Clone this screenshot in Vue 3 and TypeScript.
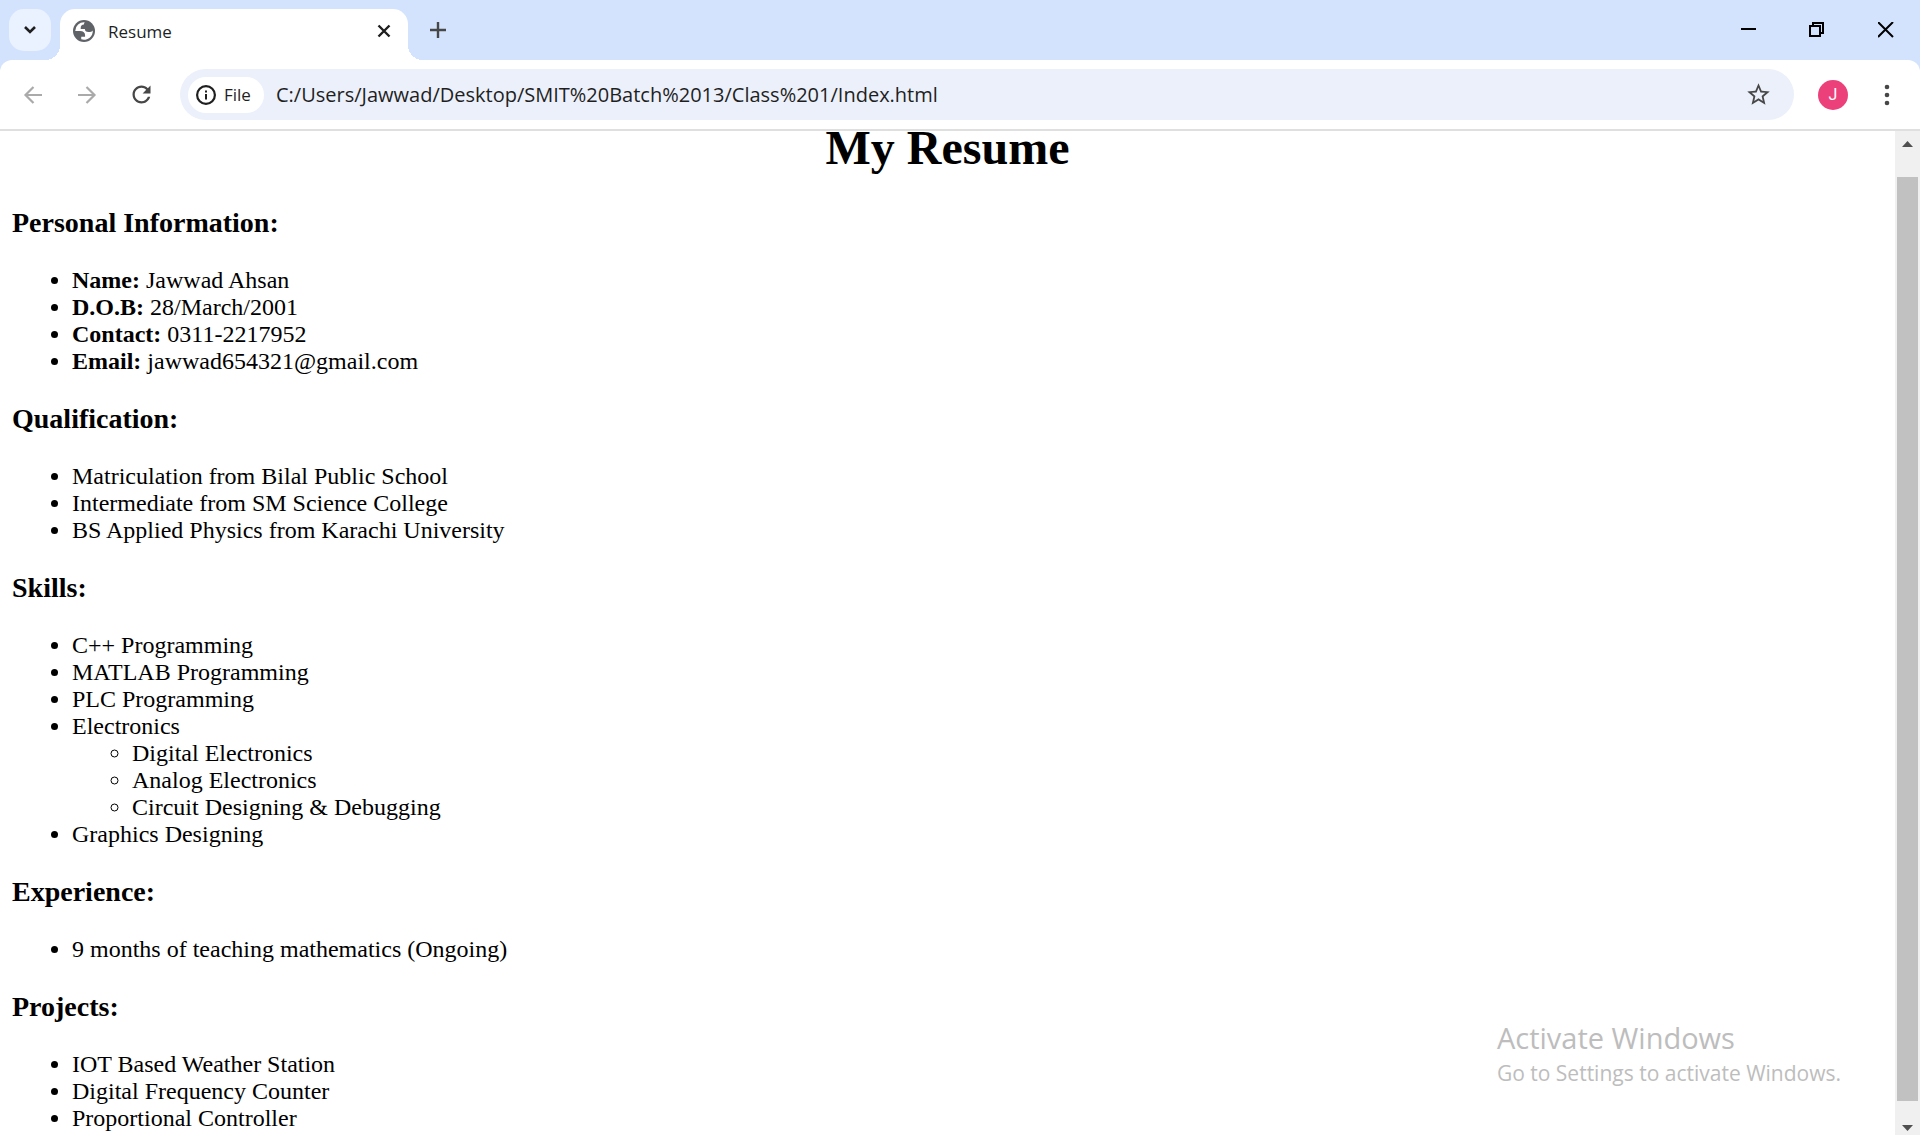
<script setup lang="ts">
import { ref } from 'vue'

interface Entry {
  label?: string
  text: string
  children?: string[]
}
interface Section {
  title: string
  items: Entry[]
}

const address = ref('C:/Users/Jawwad/Desktop/SMIT%20Batch%2013/Class%201/Index.html')

const sections: Section[] = [
  {
    title: 'Personal Information:',
    items: [
      { label: 'Name:', text: 'Jawwad Ahsan' },
      { label: 'D.O.B:', text: '28/March/2001' },
      { label: 'Contact:', text: '0311-2217952' },
      { label: 'Email:', text: 'jawwad654321@gmail.com' },
    ],
  },
  {
    title: 'Qualification:',
    items: [
      { text: 'Matriculation from Bilal Public School' },
      { text: 'Intermediate from SM Science College' },
      { text: 'BS Applied Physics from Karachi University' },
    ],
  },
  {
    title: 'Skills:',
    items: [
      { text: 'C++ Programming' },
      { text: 'MATLAB Programming' },
      { text: 'PLC Programming' },
      {
        text: 'Electronics',
        children: ['Digital Electronics', 'Analog Electronics', 'Circuit Designing & Debugging'],
      },
      { text: 'Graphics Designing' },
    ],
  },
  {
    title: 'Experience:',
    items: [{ text: '9 months of teaching mathematics (Ongoing)' }],
  },
  {
    title: 'Projects:',
    items: [
      { text: 'IOT Based Weather Station' },
      { text: 'Digital Frequency Counter' },
      { text: 'Proportional Controller' },
    ],
  },
]
</script>

<template>
  <div class="browser">
    <header class="tabstrip">
      <button class="tab-search" aria-label="Search tabs">
        <svg width="14" height="10" viewBox="0 0 14 10"><path d="M2 2l5 5 5-5" fill="none" stroke="#1f1f1f" stroke-width="2.600" /></svg>
      </button>
      <div class="tab">
        <svg width="22" height="22" viewBox="2 2 20 20">
          <circle cx="12" cy="12" r="10" fill="#5f6368" />
          <path d="M4 12h4.400c3.407.022 4.922 1.730 4.543 5.127H9.488v2.470a8.004 8.004 0 0 0 10.498-8.083C19.327 12.504 18 13 16 13c-2.137 0-3.206-.916-3.206-2.750h-3.748c-.274-2.728.683-4.092 2.870-4.092 0-.975.327-1.597.811-1.970A8.004 8.004 0 0 0 4 12z" fill="#fff" />
        </svg>
        <span class="tab-title">Resume</span>
        <button class="tab-close" aria-label="Close tab">
          <svg width="14" height="14" viewBox="0 0 14 14"><path d="M1.500 1.500l11 11M12.500 1.500l-11 11" stroke="#1f1f1f" stroke-width="2.400" /></svg>
        </button>
      </div>
      <button class="new-tab" aria-label="New tab">
        <svg width="16" height="16" viewBox="0 0 16 16"><path d="M8 0v16M0 8h16" stroke="#474747" stroke-width="2.400" /></svg>
      </button>
      <div class="window-controls">
        <button aria-label="Minimize"><svg width="16" height="16" viewBox="0 0 16 16"><path d="M1 7h15" stroke="#000" stroke-width="2" /></svg></button>
        <button aria-label="Restore"><svg width="16" height="16" viewBox="0 0 16 16"><path d="M1 4h10v10H1zM4 4V1h10v10h-3" fill="none" stroke="#000" stroke-width="2" /></svg></button>
        <button aria-label="Close"><svg width="16" height="16" viewBox="0 0 16 16"><path d="M0 0l15 15M15 0L0 15" stroke="#000" stroke-width="2" /></svg></button>
      </div>
    </header>

    <div class="toolbar-back">
      <nav class="toolbar">
        <button class="nav-button" aria-label="Back" disabled>
          <svg width="20" height="20" viewBox="0 0 20 20"><path d="M19 10H3M10.500 2l-8 8 8 8" fill="none" stroke="#aaa" stroke-width="2.200" /></svg>
        </button>
        <button class="nav-button" aria-label="Forward" disabled>
          <svg width="20" height="20" viewBox="0 0 20 20"><path d="M1 10h16M9.500 2l8 8-8 8" fill="none" stroke="#aaa" stroke-width="2.200" /></svg>
        </button>
        <button class="nav-button" aria-label="Reload">
          <svg width="27" height="27" viewBox="0 0 24 24"><path d="M17.650 6.350C16.200 4.900 14.210 4 12 4c-4.420 0-7.990 3.580-7.990 8s3.570 8 7.990 8c3.730 0 6.840-2.550 7.730-6h-2.080c-.82 2.330-3.040 4-5.650 4-3.310 0-6-2.690-6-6s2.690-6 6-6c1.660 0 3.140.690 4.220 1.780L13 11h7V4l-2.350 2.350z" fill="#474747" /></svg>
        </button>
        <div class="omnibox">
          <button class="site-info">
            <svg width="20" height="20" viewBox="0 0 20 20"><circle cx="10" cy="10" r="8.900" fill="none" stroke="#1f1f1f" stroke-width="2.200" /><path d="M10 9v5.500M10 5.500v2" stroke="#1f1f1f" stroke-width="2" /></svg>
            <span>File</span>
          </button>
          <input v-model="address" class="address" type="text" aria-label="Address" spellcheck="false" />
          <button class="star" aria-label="Bookmark this page">
            <svg width="27" height="27" viewBox="0 0 24 24"><path d="M22 9.240l-7.190-.620L12 2 9.190 8.630 2 9.240l5.460 4.730L5.820 21 12 17.270 18.180 21l-1.630-7.030L22 9.240zM12 15.400l-3.760 2.270 1-4.280-3.320-2.880 4.380-.380L12 6.100l1.710 4.040 4.380.380-3.320 2.880 1 4.280L12 15.400z" fill="#474747" /></svg>
          </button>
        </div>
        <button class="avatar" aria-label="Profile">J</button>
        <button class="menu" aria-label="Menu">
          <svg width="6" height="22" viewBox="0 0 6 22" fill="#474747"><circle cx="3" cy="3" r="2.300" /><circle cx="3" cy="11" r="2.300" /><circle cx="3" cy="19" r="2.300" /></svg>
        </button>
      </nav>
    </div>

    <div class="viewport">
      <main class="page">
        <h1>My Resume</h1>
        <section v-for="section in sections" :key="section.title">
          <h3>{{ section.title }}</h3>
          <ul>
            <li v-for="item in section.items" :key="item.text">
              <template v-if="item.label"><b>{{ item.label }}</b>{{ ' ' }}</template>{{ item.text }}
              <ul v-if="item.children">
                <li v-for="child in item.children" :key="child">{{ child }}</li>
              </ul>
            </li>
          </ul>
        </section>
      </main>
      <div class="scrollbar" aria-hidden="true">
        <svg width="11" height="6" viewBox="0 0 11 6"><path d="M0 6l5.500-6L11 6z" fill="#505050" /></svg>
        <div class="thumb"></div>
        <svg width="11" height="6" viewBox="0 0 11 6"><path d="M0 0l5.500 6L11 0z" fill="#505050" /></svg>
      </div>
      <aside class="activation">
        <p class="activation-title">Activate Windows</p>
        <p class="activation-text">Go to Settings to activate Windows.</p>
      </aside>
    </div>
  </div>
</template>

<style>
body {
  margin: 0;
}
</style>

<style scoped>
.browser {
  display: flex;
  flex-direction: column;
  height: 100vh;
  overflow: hidden;
  background: #fff;
  color: #1f1f1f;
  font-family: "Open Sans", "Noto Sans", sans-serif;
}
button {
  display: flex;
  align-items: center;
  justify-content: center;
  flex: none;
  padding: 0;
  border: 0;
  background: none;
  color: inherit;
  font-family: inherit;
}
svg {
  display: block;
  flex: none;
}
.tabstrip {
  display: flex;
  height: 60px;
  padding-left: 9px;
  background: #d3e3fd;
}
.tab-search {
  width: 42px;
  height: 42px;
  margin: 9px 9px 0 0;
  border-radius: 15px;
  background: #ebf2ff;
}
.tab {
  position: relative;
  display: flex;
  align-items: center;
  width: 348px;
  height: 51px;
  margin-top: 9px;
  padding: 0 16px 8px 13px;
  box-sizing: border-box;
  border-radius: 15px 15px 0 0;
  background: #fff;
}
.tab::before,
.tab::after {
  content: "";
  position: absolute;
  bottom: 0;
  width: 15px;
  height: 15px;
}
.tab::before {
  right: 100%;
  background: radial-gradient(circle at 0 0, transparent 15px, #fff 15px);
}
.tab::after {
  left: 100%;
  background: radial-gradient(circle at 100% 0, transparent 15px, #fff 15px);
}
.tab-title {
  flex: 1;
  margin-left: 13px;
  padding-top: 2px;
  font-size: 17px;
  line-height: 24px;
}
.tab-close {
  width: 16px;
  height: 16px;
}
.new-tab {
  width: 60px;
}
.window-controls {
  display: flex;
  margin-left: auto;
}
.window-controls button {
  width: 69px;
}
.toolbar-back {
  background: #d3e3fd;
}
.toolbar {
  display: flex;
  align-items: center;
  height: 69px;
  padding: 0 18px 0 6px;
  border-bottom: 2px solid #dfdfdf;
  border-radius: 12px 12px 0 0;
  background: #fff;
}
.nav-button {
  width: 54px;
  height: 51px;
}
.omnibox {
  display: flex;
  flex: 1;
  align-items: center;
  height: 51px;
  margin-left: 12px;
  padding: 0 22px 0 8px;
  border-radius: 26px;
  background: #ebf0fa;
}
.site-info {
  justify-content: flex-start;
  gap: 8px;
  width: 76px;
  height: 36px;
  padding-left: 8px;
  border-radius: 18px;
  background: #fff;
  font-size: 17px;
  font-weight: 500;
}
.address {
  flex: 1;
  min-width: 0;
  margin-left: 12px;
  padding: 0;
  border: 0;
  outline: 0;
  background: none;
  color: #1f1f1f;
  font-family: inherit;
  font-size: 20px;
  line-height: 28px;
}
.avatar {
  width: 30px;
  height: 30px;
  margin-left: 24px;
  border-radius: 50%;
  background: #ec407a;
  color: #fff;
  font-family: Roboto, sans-serif;
  font-size: 16px;
}
.menu {
  width: 30px;
  height: 30px;
  margin-left: 24px;
}
.viewport {
  position: relative;
  display: flex;
  flex: 1;
  min-height: 0;
}
.page {
  flex: 1;
  padding: 0 12px;
  color: #000;
  font-family: "Liberation Serif", "Times New Roman", serif;
  font-size: 24px;
  line-height: 27px;
}
h1 {
  margin: 0 0 42px;
  font-size: 48px;
  line-height: 34px;
  text-align: center;
}
h3 {
  margin: 28px 0;
  font-size: 28px;
  line-height: 32px;
}
ul {
  margin: 0;
  padding-left: 60px;
}
.scrollbar {
  display: flex;
  flex-direction: column;
  align-items: center;
  justify-content: space-between;
  width: 25px;
  padding: 10px 0 4px;
  box-sizing: border-box;
  background: #f0f0f0;
}
.thumb {
  flex: 1;
  width: 21px;
  margin: 30px 0 24px;
  background: #c1c1c1;
}
.activation {
  position: absolute;
  right: 79px;
  bottom: 47px;
  color: #bdbdbd;
}
.activation p {
  margin: 0;
}
.activation-title {
  font-size: 29px;
  line-height: 40px;
}
.activation-text {
  font-size: 21px;
  line-height: 30px;
}
</style>
